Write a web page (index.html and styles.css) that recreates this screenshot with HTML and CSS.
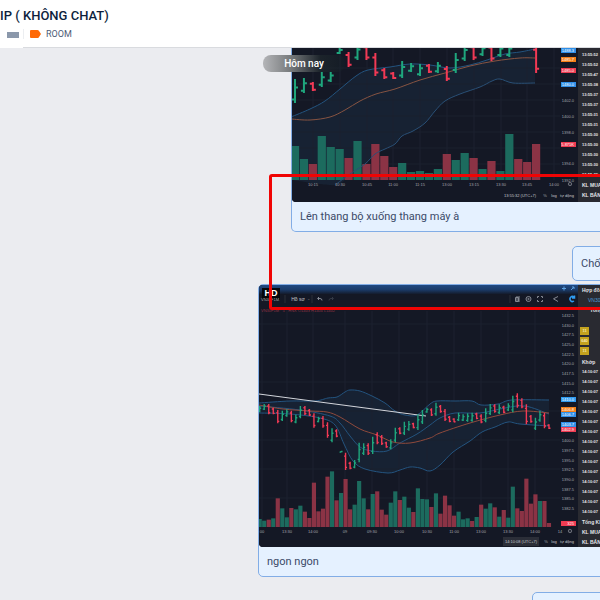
FILE: index.html
```
<!DOCTYPE html>
<html lang="vi">
<head>
  <meta charset="UTF-8">
  <meta name="viewport" content="width=device-width, initial-scale=1.0">
  <title>VIP ( KHÔNG CHAT)</title>
  <link rel="stylesheet" href="styles.css">
</head>
<body>
  <header class="chat-header">
    <h1>IP ( KHÔNG CHAT)</h1>
    <div class="tags">
      <span class="member-mark"></span>
      <span class="divider"></span>
      <svg class="tag-icon" width="11" height="8" viewBox="0 0 11 8"><path d="M1 0h6.500q.7 0 1.200.6L11 4 8.700 7.400q-.5.600-1.200.600H1Q0 8 0 7V1q0-1 1-1z" fill="#ff6905"/></svg>
      <span>ROOM</span>
    </div>
  </header>

  <main class="feed">
    <div class="message message-top">
      <div class="shot">
        <svg id="chartTop" class="chart chart-top" viewBox="292 48 286 154"></svg>
        <div class="side side-top">
          <ul id="timesTop" class="times"></ul>
          <p>KL MUA</p>
          <p>KL BÁN</p>
        </div>
      </div>
      <p class="caption">Lên thang bộ xuống thang máy à</p>
    </div>

    <div class="message message-short">
      <p class="caption">Chố</p>
    </div>

    <div class="message message-main">
      <div class="shot shot-main">
        <svg id="chartMain" class="chart chart-main" viewBox="259 285 319 262"></svg>
        <div class="side side-main">
          <p class="side-title">Hợp đồ</p>
          <p class="side-code">VN30</p>
          <p class="side-total">Tổng</p>
          <ul class="marks">
            <li>11</li>
            <li>640</li>
            <li>11</li>
          </ul>
          <p class="side-title">Khớp</p>
          <ul id="timesMain" class="times"></ul>
          <p>Tổng KL</p>
          <p>KL MUA</p>
          <p>KL BÁN</p>
        </div>
      </div>
      <p class="caption">ngon ngon</p>
    </div>

    <div class="message message-next">
      <p class="caption">&nbsp;</p>
    </div>

    <div class="date-pill">Hôm nay</div>
    <div class="highlight"></div>
  </main>

  <script src="script.js"></script>
</body>
</html>
```
FILE: styles.css
```
* {
  box-sizing: border-box;
}
body {
  margin: 0;
  height: 100vh;
  display: flex;
  flex-direction: column;
  overflow: hidden;
  font-family: Roboto, 'Open Sans', sans-serif;
  background-color: #ebecf0;
  color: #3b4a68;
}
h1, p, ul {
  margin: 0;
  padding: 0;
}
ul {
  list-style: none;
}
.chat-header {
  position: relative;
  z-index: 1;
  flex: none;
  height: 48px;
  padding-top: 7px;
  background-color: #fff;
  border-bottom: 1px solid #d9dbdf;
}
.chat-header::after {
  content: '';
  position: absolute;
  top: 100%;
  left: 0;
  width: 23px;
  height: 2px;
  margin-top: -1px;
  background-color: #fff;
}
.chat-header h1 {
  font-size: 13px;
  line-height: 18px;
  font-weight: 500;
  color: #0e1f3d;
}
.tags {
  display: flex;
  align-items: center;
  height: 17px;
  padding-left: 7px;
  font-size: 9px;
  color: #4c5b76;
}
.member-mark {
  width: 12px;
  height: 6px;
  margin-top: 3px;
  background-color: #8b98ab;
}
.divider {
  width: 1px;
  height: 10px;
  margin: 0 6px 0 4px;
  background-color: #eceef1;
}
.tag-icon {
  margin-right: 5px;
}
.feed {
  position: relative;
  flex: 1;
  min-height: 0;
  overflow: hidden;
}
.message {
  margin-right: -12px;
  border: 1px solid #82ade6;
  border-radius: 5px;
  background-color: #e5f1ff;
  overflow: hidden;
}
.message-top {
  margin-left: 291px;
  border-top: none;
  border-top-left-radius: 0;
}
.message-short {
  margin: 14px -12px 0 572px;
}
.message-main {
  margin-top: 3px;
  margin-left: 258px;
}
.message-next {
  margin-top: 15px;
  margin-left: 532px;
}
.caption {
  padding: 0 8px;
  font-size: 11px;
  line-height: 29px;
  white-space: nowrap;
}
.message-short .caption {
  line-height: 33px;
}
.shot {
  display: flex;
  overflow: hidden;
  background-color: #141825;
  border-radius: 0 0 0 4px;
}
.chart {
  flex: none;
  display: block;
  font-family: 'Liberation Sans', sans-serif;
}
.chart-top {
  width: 286px;
  height: 154px;
}
.chart-main {
  width: 319px;
  height: 262px;
}
.side {
  flex: 1;
  min-width: 0;
  padding-left: 4px;
  overflow: hidden;
  background-color: #292a31;
  color: #e4e5e8;
  font-family: 'Liberation Sans', sans-serif;
  font-size: 5px;
  line-height: 10px;
  font-weight: bold;
  white-space: nowrap;
}
.side-top {
  padding-top: 2px;
}
.times {
  font-size: 4px;
}
.side-code {
  padding-left: 6px;
  color: #4e9fd8;
  font-weight: normal;
}
.side-total {
  padding-left: 8px;
}
.marks {
  padding-top: 12px;
}
.marks li {
  width: 9px;
  height: 8px;
  margin: 0 0 2px -2px;
  background-color: #c3a21e;
  color: #f4e9b4;
  font-size: 4px;
  line-height: 8px;
  text-align: center;
}
.date-pill {
  position: absolute;
  top: 7px;
  left: 263px;
  width: 82px;
  height: 17px;
  border-radius: 8px;
  background: linear-gradient(to right, #b4b5b8, #747779 35%, rgba(30, 38, 44, 0.8) 70%, rgba(20, 40, 40, 0.2));
  color: #fff;
  font-size: 10px;
  line-height: 17px;
  font-weight: 500;
  text-align: center;
}
.highlight {
  position: absolute;
  top: 126px;
  left: 269px;
  right: -12px;
  height: 136px;
  border: 3px solid #f00404;
  border-radius: 3px;
}
```
FILE: script.js
```
const GREEN = '#1fa67d';
const RED = '#f23a55';
const VOL_GREEN = '#1c6b5e';
const VOL_RED = '#8b3345';

// bars: [high, low] per bar, colors: g = up, r = down
const topData = {
  x: 295, step: 8.93, base: 180,
  bars: [[79,103],[78,93],[82,91],[72,87],[72,82],[48,54],[52,67],[44,60],[44,60],[53,76],[68,79],[72,79],[61,78],[63,72],[64,76],[64,73],[62,73],[66,81],[53,73],[44,61],[44,60],[44,56],[44,61],[44,57],[44,57],null,null,[44,73]],
  colors: 'ggrggg' + 'rgrrrrgggrgrggrgrggggr',
  volumes: [34,21,16,44,33,31,22,39,16,36,24,13,17,8,9,7,11,26,20,27,22,11,19,9,46,21,18,36],
  volumeColors: 'ggrgggrgrrrrgggggrggrgrggrrr'
};

const mainData = {
  x: 259.7, step: 4.52, base: 527,
  // thirds of a pixel below y = 380
  bars: [[78,97],[72,90],[72,103],[83,103],[90,130],[92,123],[88,110],[92,127],[104,130],[78,115],[78,105],[87,108],[100,143],[110,127],[108,143],[127,173],[145,187],[148,172],[213,217],[218,270],[245,268],[240,265],[188,247],[190,225],[190,225],[170,222],[157,193],[165,195],[185,203],[178,208],[143,187],[142,163],[125,165],[123,152],[128,145],[103,150],[90,132],[83,98],[85,108],[68,107],[75,98],[87,123],[108,127],[115,127],[98,123],[103,123],[100,125],[98,125],[98,118],[103,130],[85,127],[72,105],[73,98],[73,102],[77,100],[70,93],[47,97],[40,83],[55,85],[73,133],[105,128],[113,150],[93,125],[98,145],[133,147]]
    .map(bar => bar.map(v => 380 + v / 3)),
  colors: 'ggrrrggrggrrrgrrgrgrrgggrgrrrggrggrgggrgrrrrggggrrggrgrggrrrrggrr',
  volumes: [24,19,22,26,86,56,29,57,53,64,46,27,133,47,55,151,167,80,102,144,53,67,138,86,53,99,107,52,37,73,107,81,91,58,45,116,84,83,60,101,40,94,65,34,46,23,26,18,30,67,55,71,59,31,51,28,121,56,48,145,70,98,78,78,12]
    .map(v => v / 3),
  volumeColors: 'ggrgrggrggrrrrrrgrgrrgggrgrrrggrggrgggrgrrrrgggrgrggrgrggrrrrrgrr'
};

function line(x1, y1, x2, y2, color, width = 1) {
  return `<line x1="${x1}" y1="${y1}" x2="${x2}" y2="${y2}" stroke="${color}" stroke-width="${width}"/>`;
}

function rect(x, y, w, h, fill) {
  return `<rect x="${x}" y="${y}" width="${w}" height="${h}" fill="${fill}"/>`;
}

function text(x, y, label, fill = '#a3a6ad', size = 4, anchor = 'middle') {
  return `<text x="${x}" y="${y}" fill="${fill}" font-size="${size}" text-anchor="${anchor}">${label}</text>`;
}

// smooth line through the points
function curvePath(points) {
  let d = `M${points[0]}`;
  for (let i = 0; i < points.length - 1; i++) {
    const p0 = points[i - 1] || points[i];
    const p1 = points[i];
    const p2 = points[i + 1];
    const p3 = points[i + 2] || p2;
    d += `C${p1[0] + (p2[0] - p0[0]) / 6},${p1[1] + (p2[1] - p0[1]) / 6} ${p2[0] - (p3[0] - p1[0]) / 6},${p2[1] - (p3[1] - p1[1]) / 6} ${p2}`;
  }
  return d;
}

function curve(points, color) {
  return `<path d="${curvePath(points)}" fill="none" stroke="${color}"/>`;
}

function band(upper, lower) {
  return `<path d="${curvePath(upper)}L${curvePath([...lower].reverse()).slice(1)}Z" fill="#172233"/>`;
}

function drawVolumes(data) {
  return data.volumes.map((h, i) =>
    rect(data.x + data.step * (i - 0.46), data.base - h, data.step * 0.92, h, data.volumeColors[i] === 'g' ? VOL_GREEN : VOL_RED)
  ).join('');
}

function drawBars(data, width, tick) {
  return data.bars.map((bar, i) => {
    if (!bar) return '';
    const x = data.x + data.step * i;
    const up = data.colors[i] === 'g';
    const color = up ? GREEN : RED;
    const [high, low] = bar;
    const open = up ? low - (low - high) * 0.15 : high + (low - high) * 0.2;
    const close = up ? high + (low - high) * 0.35 : low - (low - high) * 0.15;
    return line(x, high, x, low, color, width)
      + line(x - tick, open, x, open, color, width)
      + line(x, close, x + tick, close, color, width);
  }).join('');
}

function badge(y, label, fill) {
  return rect(561, y, 15, 5, fill) + text(574, y + 4, label, '#fff', 4, 'end');
}

function drawGrid(xs, ys, left, right, top, bottom) {
  return xs.map(x => line(x, top, x, bottom, '#1c2130')).join('')
    + ys.map(y => line(left, y, right, y, '#1b202e')).join('');
}

function gear(x, y) {
  return `<circle cx="${x}" cy="${y}" r="1.7" fill="none" stroke="#7d808a" stroke-width=".8"/><circle cx="${x}" cy="${y}" r=".5" fill="#7d808a"/>`;
}

function drawTop() {
  const upper = [[291,117],[310,109],[325,101],[340,89],[356,76],[368,70],[390,67],[410,64],[430,65],[450,68],[470,65],[487,60],[505,54],[520,52],[535,49]];
  const middle = [[291,119],[310,120],[330,117],[345,110],[360,101],[376,94],[395,89],[420,80],[445,73],[470,66],[495,61],[520,58],[535,58]];
  const lower = [[335,185],[350,174],[365,164],[375,154],[385,149],[395,144],[402,136],[413,131],[425,123],[435,111],[445,101],[460,94],[480,87],[492,81],[500,79],[513,83],[535,83]];
  const times = ['10:15', '10:30', '10:45', '11:00', '11:15', '13:00', '13:15', '13:30', '13:45', '14:00'];
  const xs = times.map((t, i) => Math.round(313 + 26.800 * i));
  const prices = [[100, '1402.0'], [116, '1400.0'], [132, '1398.0'], [163, '1394.0'], [180, '1392.0']];

  document.getElementById('chartTop').innerHTML =
    rect(291, 48, 290, 154, '#141825')
    + band(upper, [[291, 180], ...lower])
    + drawGrid(xs, [68, 84, 100, 116, 132, 148, 164], 291, 560, 48, 180)
    + drawVolumes(topData)
    + curve(upper, '#24547f') + curve(middle, '#875442') + curve(lower, '#2a5076')
    + drawBars(topData, 2, 3)
    + times.map((t, i) => text(xs[i], 186, t)).join('')
    + prices.map(p => text(574, p[0] + 2, p[1], '#a3a6ad', 4, 'end')).join('')
    + badge(48, '1488.3', '#2f8fe8') + badge(57, '1485.7', '#f57f17')
    + badge(68, '1485.0', '#ee3b52') + badge(82, '1480.0', '#2f8fe8')
    + badge(142, '5.871K', '#ee3b52')
    + gear(570, 184)
    + text(520, 197, '13:55:32 (UTC+7)', '#c6c8cd', 4)
    + text(545, 197, '%') + text(554, 197, 'log', '#c6c8cd') + text(567, 197, 'tự động', '#c6c8cd');
}

function drawMain() {
  const upper = [[259,403],[290,401],[315,401],[328,398],[337,397],[345,392],[350,390],[360,391],[372,396],[385,403],[395,411],[405,415],[417,415],[430,404],[437,401],[455,401],[472,401],[481,405],[498,404],[512,400],[549,400]];
  const inner = [[259,406],[300,410],[330,416],[340,423],[350,436],[360,447],[372,451],[387,451],[400,443],[417,434],[430,425],[440,418],[455,413],[480,413],[505,408],[525,406],[549,414]];
  const middle = [[259,405],[283,409],[310,411],[327,412],[340,417],[360,429],[377,435],[393,442],[410,443],[430,438],[440,433],[470,423],[500,415],[523,411],[549,413]];
  const lower = [[259,413],[290,414],[320,418],[335,425],[344,444],[353,461],[365,469],[388,473],[400,470],[410,467],[420,468],[430,471],[440,465],[453,452],[470,441],[482,432],[495,427],[508,422],[520,424],[549,426]];
  const times = [[262, '00'], [287, '13:30'], [313, '14:00'], [345, '09'], [372, '09:30'], [399, '10:00'], [427, '10:30'], [454, '11:00'], [481, '13:00'], [508, '13:30'], [535, '14:00']];
  let prices = '';
  for (let i = 0; i < 21; i++) {
    if (i > 8 && i < 13) continue;
    prices += text(574, Math.round(317 + 9.650 * i), (1432.5 - 2.5 * i).toFixed(1), '#a3a6ad', 4, 'end');
  }

  document.getElementById('chartMain').innerHTML =
    `<defs><linearGradient id="bar" x2="0" y2="1"><stop offset="0" stop-color="#204982"/><stop offset=".5" stop-color="#1b3c6b"/><stop offset="1" stop-color="#141c2d"/></linearGradient></defs>`
    + rect(259, 285, 320, 262, '#141825')
    + rect(259, 285, 320, 9, 'url(#bar)')
    + band(upper, lower)
    + drawGrid(times.map(t => t[0]), [324, 353, 382, 411, 440, 469, 498], 259, 560, 311, 527)
    + drawVolumes(mainData)
    + curve(upper, '#24547f') + curve(inner, '#24547f') + curve(middle, '#8f4a3c') + curve(lower, '#24547f')
    + line(259, 394, 426, 416, '#d3d6dc')
    + drawBars(mainData, 1.4, 1.5)
    + times.map(t => text(t[0], 533, t[1])).join('')
    + prices
    + badge(397, '1410.0', '#2f9bf0') + badge(407, '1406.8', '#f57f17') + badge(412, '1406.7', '#2f8fe8')
    + badge(422, '1403.7', '#2f8fe8') + badge(427, '1402.9', '#ee3b52') + badge(521, '325', '#ee3b52')
    // toolbar
    + rect(262, 288, 18, 12, '#05070b')
    + text(271, 296, 'HD', '#fff', 9).replace('<text', '<text font-weight="bold"')
    + text(270, 301, 'VN30F1M', '#aaa', 4)
    + text(298, 301, 'Hồ sơ', '#c6c8cd', 5) + text(308, 300, '⌄', '#777', 4)
    + line(285, 295, 285, 303, '#2a2e39') + line(312, 295, 312, 303, '#2a2e39') + line(510, 295, 510, 303, '#2a2e39')
    + `<g fill="none" stroke="#858993">
        <path d="M319 297l-1.500 1.500 1.500 1.500M318 298.500h2q2 0 2 2"/>
        <path d="M332 297l1.500 1.500-1.500 1.500M333 298.500h-2q-2 0-2 2" stroke="#343945"/>
        <path d="M515.500 301.500v-4h3v4zM517 296v6M519 296v6"/>
        <circle cx="528.500" cy="299" r="2.500"/><circle cx="528.500" cy="299" r=".7"/>
        <path d="M537.500 298v-1.500h1.500M541 296.500h1.500v1.500M542.500 300v1.500h-1.500M539 301.500h-1.500v-1.500"/>
        <path d="M558 296.500l-4.500 2.300 4.500 2.700"/>
        <path d="M574 297a2.500 2.500 0 1 0 0 4M574.500 295.500v2.500h-2.500" stroke="#2f9bf0" stroke-width="1.500"/>
        <path d="M562 288.500h4M564 286.500v4M571 290l3-3M574 289v-2h-2" stroke="#5da0e0"/>
      </g>`
    + text(261, 312, 'VN30F1M · 5 · HNX  O1403 H1404 L1402', '#8f3244', 4, 'start')
    // footer
    + rect(503, 537, 36, 9, '#2b2e38')
    + text(521, 543, '14:10:08 (UTC+7)', '#c6c8cd', 4)
    + text(546, 543, '%') + text(554, 543, 'log', '#c6c8cd') + text(567, 543, 'tự động', '#c6c8cd')
    + text(560, 533, '14') + gear(570, 531);
}

function fillTimes(id, times) {
  document.getElementById(id).innerHTML = times.map(t => `<li>${t}</li>`).join('');
}

drawTop();
drawMain();
fillTimes('timesTop', ['13:55:52', '13:55:52', '13:55:47', '13:55:38', '13:55:37', '13:55:37', '13:55:31', '13:55:31', '13:55:30', '13:55:30', '13:55:30', '13:55:30', '13:55:29']);
fillTimes('timesMain', Array(15).fill('14:10:07'));
```
